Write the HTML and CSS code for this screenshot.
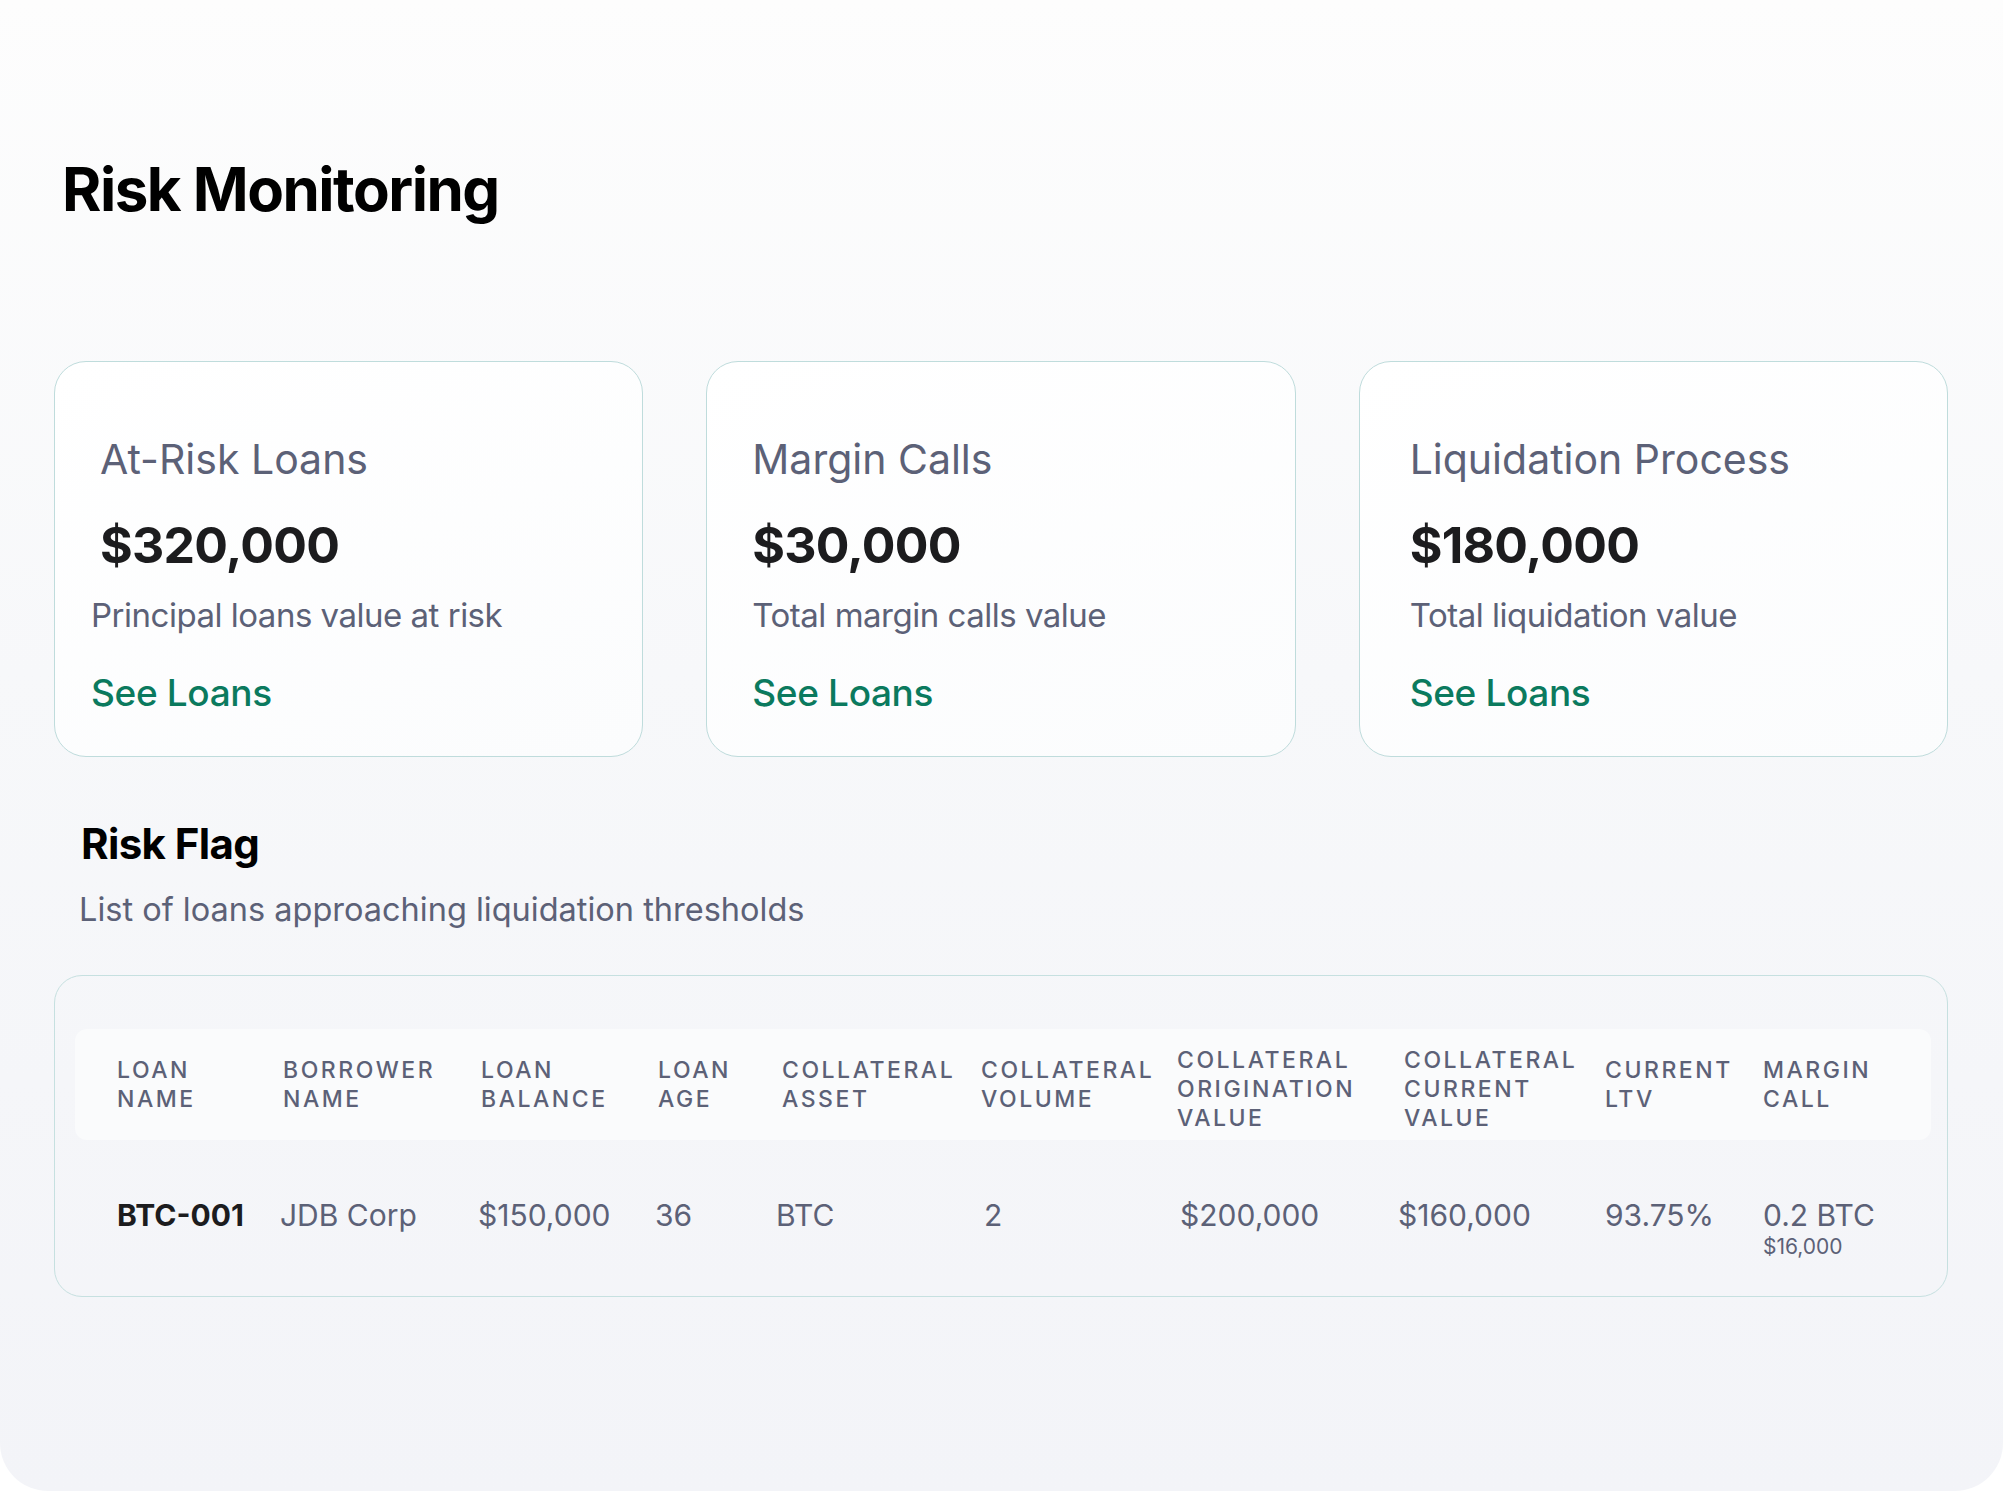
FILE: index.html
```
<!DOCTYPE html>
<html lang="en">
<head>
  <meta charset="UTF-8">
  <meta name="viewport" content="width=device-width, initial-scale=1.0">
  <title>Risk Monitoring</title>
  <link rel="stylesheet" href="styles.css">
</head>
<body>

  <div class="page">
    <h1 class="page-title">Risk Monitoring</h1>

    <!-- Summary cards -->
    <div class="summary-cards">
      <div class="summary-card">
        <div class="card-title">At-Risk Loans</div>
        <div class="card-amount">$320,000</div>
        <div class="card-note card-note-tight">Principal loans value at risk</div>
        <a href="#" class="card-link card-note-tight">See Loans</a>
      </div>

      <div class="summary-card">
        <div class="card-title">Margin Calls</div>
        <div class="card-amount">$30,000</div>
        <div class="card-note">Total margin calls value</div>
        <a href="#" class="card-link">See Loans</a>
      </div>

      <div class="summary-card summary-card-wide">
        <div class="card-title">Liquidation Process</div>
        <div class="card-amount">$180,000</div>
        <div class="card-note">Total liquidation value</div>
        <a href="#" class="card-link">See Loans</a>
      </div>
    </div>

    <!-- Risk flag table -->
    <div class="section-head">
      <h2 class="section-title">Risk Flag</h2>
      <p class="section-text">List of loans approaching liquidation thresholds</p>
    </div>

    <div class="table-card">
      <div class="table-row table-header">
        <div>Loan<br>Name</div>
        <div>Borrower<br>Name</div>
        <div>Loan<br>Balance</div>
        <div>Loan<br>Age</div>
        <div>Collateral<br>Asset</div>
        <div>Collateral<br>Volume</div>
        <div class="header-tall">Collateral<br>Origination<br>Value</div>
        <div class="header-tall">Collateral<br>Current<br>Value</div>
        <div>Current<br>LTV</div>
        <div>Margin<br>Call</div>
      </div>

      <div class="table-row table-body">
        <div class="loan-name">BTC-001</div>
        <div class="shift-left">JDB Corp</div>
        <div class="shift-left">$150,000</div>
        <div class="shift-left">36</div>
        <div class="shift-left-more">BTC</div>
        <div class="shift-right">2</div>
        <div class="shift-right">$200,000</div>
        <div class="shift-left-more">$160,000</div>
        <div>93.75%</div>
        <div>
          0.2 BTC
          <span class="sub-value">$16,000</span>
        </div>
      </div>
    </div>
  </div>

</body>
</html>
```

FILE: styles.css
```
* {
  margin: 0;
  padding: 0;
  box-sizing: border-box;
}

body {
  font-family: Inter, "Noto Sans", Arial, sans-serif;
  background-color: #ffffff;
  overflow: hidden;
}

.page {
  height: 100vh;
  padding: 153px 55px 0 54px;
  background: linear-gradient(180deg, #fdfdfd 0%, #f7f8fa 45%, #f3f4f8 100%);
  border-radius: 0 0 48px 48px;
}

.page-title {
  font-size: 60px;
  line-height: 72px;
  font-weight: 700;
  color: #000000;
  letter-spacing: -0.025em;
  margin-left: 8px;
}

/* cards */

.summary-cards {
  display: grid;
  grid-template-columns: repeat(3, 1fr);
  column-gap: 63px;
  margin-top: 136px;
}

.summary-card {
  height: 396px;
  padding: 73px 40px 0 45px;
  background: linear-gradient(160deg, #ffffff 0%, #fbfcfd 100%);
  border: 1.5px solid #bfdcdc;
  border-radius: 32px;
}

.summary-card-wide {
  padding-left: 50px;
}

.card-title {
  font-size: 41px;
  line-height: 49px;
  color: #5c6177;
}

.card-amount {
  margin-top: 31px;
  font-size: 50px;
  line-height: 60px;
  font-weight: 700;
  color: #1c1c1e;
  letter-spacing: -0.015em;
}

.card-note {
  margin-top: 20px;
  font-size: 33px;
  line-height: 40px;
  color: #5c6177;
  letter-spacing: -0.015em;
}

.card-note-tight {
  margin-left: -9px;
}

.card-link {
  display: block;
  margin-top: 36px;
  font-size: 37px;
  line-height: 44px;
  font-weight: 500;
  color: #0b7a5e;
  text-decoration: none;
  letter-spacing: -0.01em;
}

/* risk flag */

.section-head {
  margin-top: 62px;
  padding-left: 25px;
}

.section-title {
  margin-left: 2px;
  font-size: 42px;
  line-height: 50px;
  font-weight: 700;
  color: #000000;
  letter-spacing: -0.015em;
}

.section-text {
  margin-top: 21px;
  font-size: 32.5px;
  line-height: 40px;
  color: #5c6177;
}

.table-card {
  margin-top: 45px;
  padding: 53px 16px 0 20px;
  height: 322px;
  border: 1.5px solid #c6e0e0;
  border-radius: 28px;
}

.table-row {
  display: grid;
  grid-template-columns: 166px 198px 177px 124px 199px 196px 227px 201px 158px 1fr;
  padding-left: 42px;
}

.table-header {
  height: 111px;
  align-items: center;
  background-color: #fafbfc;
  border-radius: 12px;
  font-size: 23px;
  line-height: 29px;
  font-weight: 500;
  color: #5c6177;
  text-transform: uppercase;
  letter-spacing: 0.11em;
}

.header-tall {
  padding-top: 10px;
}

.table-body {
  padding-top: 56px;
  align-items: start;
  font-size: 30px;
  line-height: 38px;
  color: #5c6177;
}

.loan-name {
  font-weight: 700;
  color: #1c1c1e;
}

.shift-left {
  margin-left: -3px;
}

.shift-left-more {
  margin-left: -6px;
}

.shift-right {
  margin-left: 3px;
}

.sub-value {
  display: block;
  font-size: 21px;
  line-height: 26px;
}
```
